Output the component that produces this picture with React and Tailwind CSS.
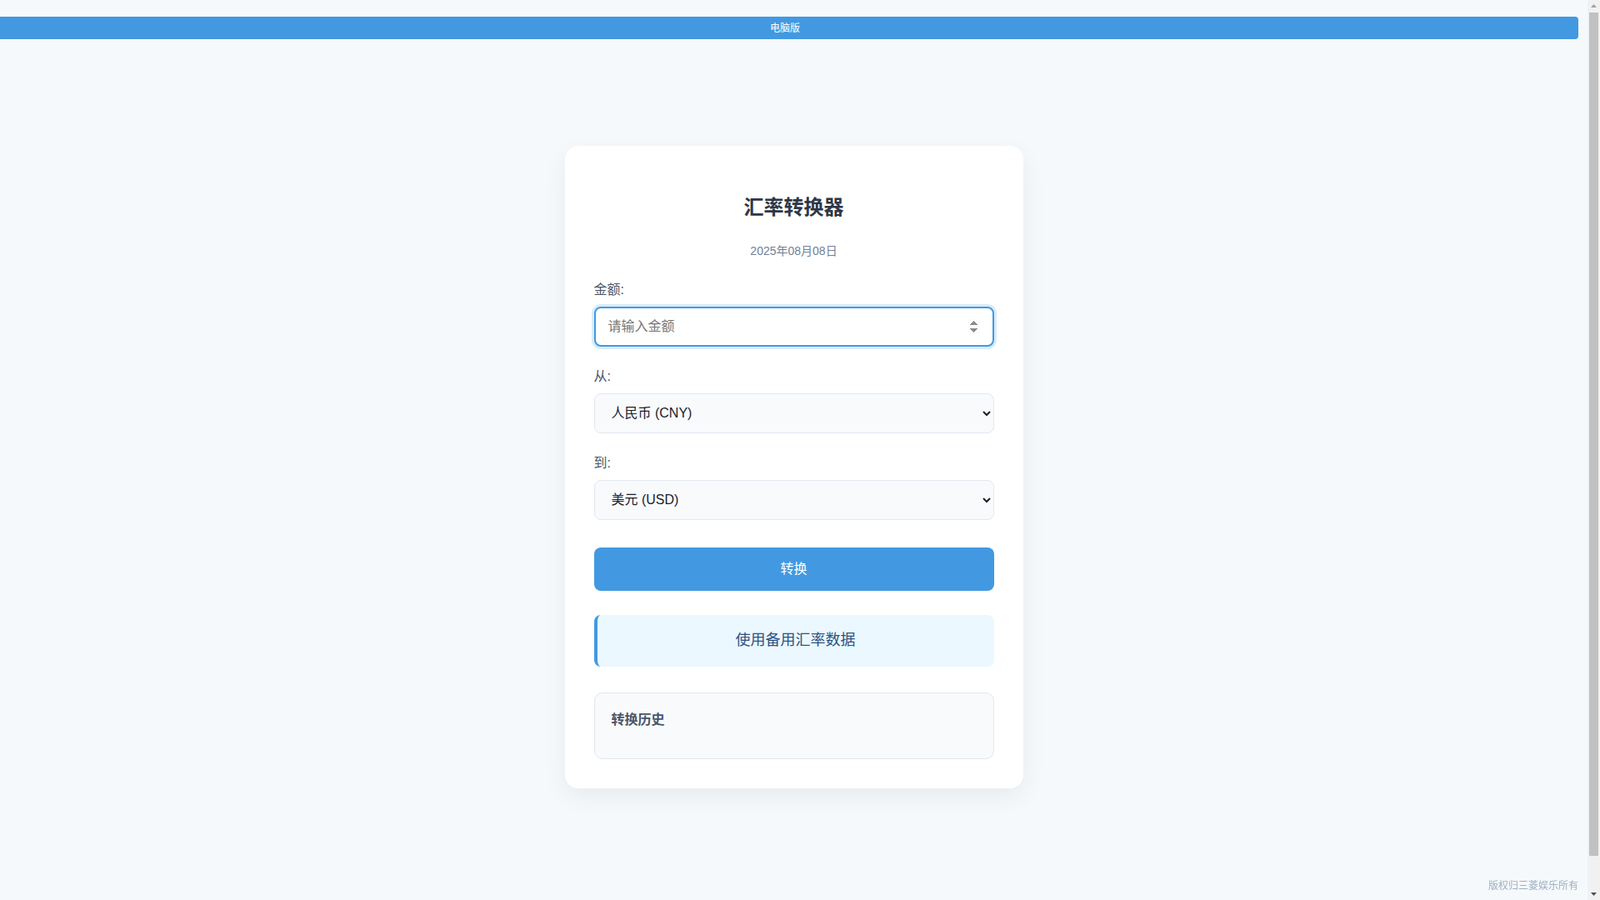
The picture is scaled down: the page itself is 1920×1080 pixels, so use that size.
import React from "react";

const font = { fontFamily: '"Liberation Sans", Arial, "Noto Sans CJK SC", sans-serif' };

// the reference shows a classic browser scrollbar on the right
function FakeScrollbar() {
  return (
    <div className="fixed top-0 right-0 w-[15px] h-screen bg-[#f1f1f1] flex flex-col items-center z-20">
      <svg width="15" height="15" viewBox="0 0 15 15" className="shrink-0">
        <path d="M7.5 5 L11 9 L4 9 Z" fill="#a3a3a3" />
      </svg>
      <div className="w-[11px] h-[1012px] bg-[#c1c1c1]" />
      <div className="flex-1" />
      <svg width="15" height="15" viewBox="0 0 15 15" className="shrink-0">
        <path d="M4 6 L11 6 L7.5 10 Z" fill="#505050" />
      </svg>
    </div>
  );
}

export default function App() {
  return (
    <div className="bg-[#f5f9fc] py-5 pr-[15px]" style={font}>
      {/* top strip */}
      <div className="fixed top-[20px] left-0 right-[26px] h-[27px] pr-[10px] bg-[#4299e1] rounded-r-[4px] flex items-center justify-center text-white text-[12px] z-10">
        电脑版
      </div>

      <div className="min-h-screen flex items-center justify-center">
        <div className="w-[550px] bg-white rounded-2xl shadow-[0_10px_30px_rgba(0,0,0,0.06)] p-[35px]">
          <h1 className="mt-[21px] text-center text-2xl leading-9 font-bold text-[#2d3748]">汇率转换器</h1>
          <p className="mt-6 text-center text-[14px] leading-[21px] text-[#718096]">2025年08月08日</p>

          <div className="mt-6">
            <label className="block mb-2 text-[16px] leading-6 text-[#4a5568]">金额:</label>
            <input
              type="number"
              autoFocus
              placeholder="请输入金额"
              className="block w-full h-[48px] px-[15px] rounded-lg border-2 border-[#4299e1] bg-white text-[16px] text-[#1a202c] placeholder:text-[#757575] outline-none shadow-[0_0_0_3px_rgba(66,153,225,0.2)]"
            />
          </div>

          <div className="mt-6">
            <label className="block mb-2 text-[16px] leading-6 text-[#4a5568]">从:</label>
            <select className="block w-full h-[48px] px-4 rounded-lg border border-[#e2e8f0] bg-[#f8fafc] text-[16px] text-[#1a202c] outline-none">
              <option>人民币 (CNY)</option>
              <option>美元 (USD)</option>
            </select>
          </div>

          <div className="mt-6">
            <label className="block mb-2 text-[16px] leading-6 text-[#4a5568]">到:</label>
            <select defaultValue="美元 (USD)" className="block w-full h-[48px] px-4 rounded-lg border border-[#e2e8f0] bg-[#f8fafc] text-[16px] text-[#1a202c] outline-none">
              <option>人民币 (CNY)</option>
              <option>美元 (USD)</option>
            </select>
          </div>

          <button className="mt-[33px] w-full h-[52px] rounded-lg bg-[#4299e1] text-white text-[16px]">转换</button>

          <div className="mt-[29px] h-[62px] flex items-center justify-center rounded-lg border-l-4 border-[#4299e1] bg-[#ebf8ff] text-[18px] text-[#2c5282]">
            使用备用汇率数据
          </div>

          <div className="mt-[31px] min-h-[80px] p-5 rounded-[10px] border border-[#e2e8f0] bg-[#f8fafc]">
            <h3 className="text-[16px] leading-6 font-bold text-[#4a5568]">转换历史</h3>
          </div>
        </div>
      </div>

      <div className="fixed bottom-[8px] right-[26px] text-[12px] leading-[18px] text-[#a0aec0]">版权归三菱娱乐所有</div>
      <FakeScrollbar />
    </div>
  );
}
